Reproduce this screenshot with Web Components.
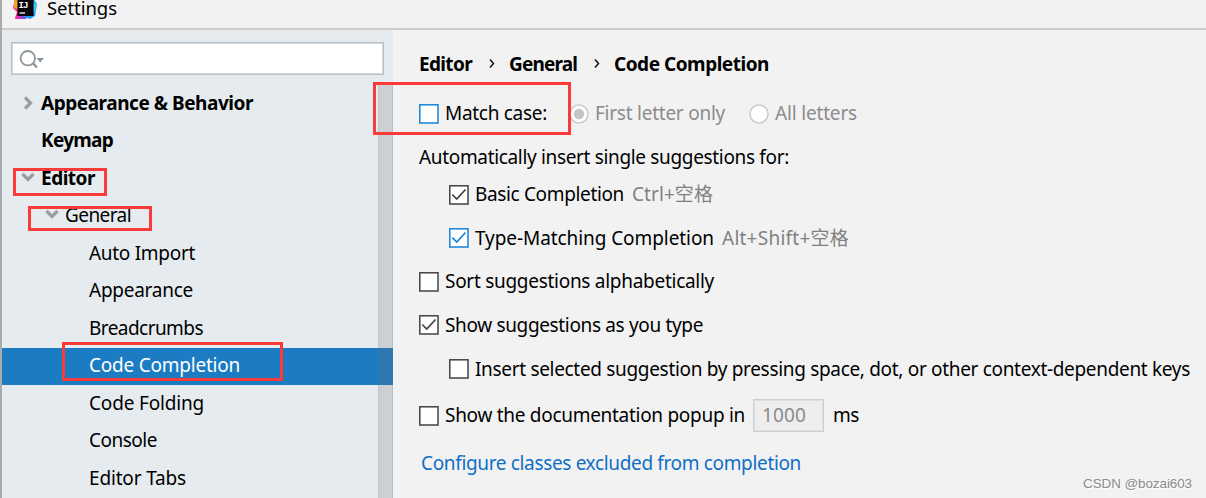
<!DOCTYPE html>
<html lang="en">
<head>
<meta charset="utf-8">
<title>Settings</title>
<style>
  body {
    margin: 0;
    overflow: hidden;
    font-family: "Noto Sans", "Noto Sans CJK SC", sans-serif;
    font-size: 19px;
    color: #000;
  }
</style>
</head>
<body>
<settings-window>
  <search-field slot="side"></search-field>
  <tree-view slot="side">
    <tree-item level="0" arrow="right" bold w="212">Appearance &amp; Behavior</tree-item>
    <tree-item level="0" bold w="72">Keymap</tree-item>
    <tree-item level="0" arrow="down" bold w="54">Editor</tree-item>
    <tree-item level="1" arrow="down" w="66">General</tree-item>
    <tree-item level="2" w="106">Auto Import</tree-item>
    <tree-item level="2" w="104">Appearance</tree-item>
    <tree-item level="2" w="114">Breadcrumbs</tree-item>
    <tree-item level="2" selected w="151">Code Completion</tree-item>
    <tree-item level="2" w="115">Code Folding</tree-item>
    <tree-item level="2" w="68">Console</tree-item>
    <tree-item level="2" w="97">Editor Tabs</tree-item>
  </tree-view>

  <form-row style="height: 36px; margin-bottom: 10px">
    <bread-crumbs></bread-crumbs>
  </form-row>
  <form-row style="height: 43px">
    <check-box tone="blue"></check-box>
    <fit-text w="102">Match case:</fit-text>
    <radio-dot checked style="margin-left: 22px"></radio-dot>
    <fit-text w="130" class="off">First letter only</fit-text>
    <radio-dot style="margin-left: 24px"></radio-dot>
    <fit-text w="82" class="off">All letters</fit-text>
  </form-row>
  <form-row style="height: 44px">
    <fit-text w="370">Automatically insert single suggestions for:</fit-text>
  </form-row>
  <form-row indent style="height: 31px; margin-bottom: 6px">
    <check-box checked></check-box>
    <fit-text w="149">Basic Completion</fit-text>
    <fit-text w="81" class="hint">Ctrl+空格</fit-text>
  </form-row>
  <form-row indent style="height: 44px">
    <check-box checked tone="blue"></check-box>
    <fit-text w="239">Type-Matching Completion</fit-text>
    <fit-text w="127" class="hint">Alt+Shift+空格</fit-text>
  </form-row>
  <form-row style="height: 43px">
    <check-box></check-box>
    <fit-text w="269">Sort suggestions alphabetically</fit-text>
  </form-row>
  <form-row style="height: 44px">
    <check-box checked></check-box>
    <fit-text w="258">Show suggestions as you type</fit-text>
  </form-row>
  <form-row indent style="height: 44px">
    <check-box></check-box>
    <fit-text w="715">Insert selected suggestion by pressing space, dot, or other context-dependent keys</fit-text>
  </form-row>
  <form-row style="height: 49px">
    <check-box></check-box>
    <fit-text w="300">Show the documentation popup in</fit-text>
    <number-field><fit-text w="44">1000</fit-text></number-field>
    <fit-text w="26">ms</fit-text>
  </form-row>
  <form-row style="height: 47px">
    <fit-text w="380" class="link">Configure classes excluded from completion</fit-text>
  </form-row>

  <mark-box slot="over" style="left: 373px; top: 82px; width: 198px; height: 53px"></mark-box>
  <mark-box slot="over" style="left: 13px; top: 168px; width: 94px; height: 28px"></mark-box>
  <mark-box slot="over" style="left: 28px; top: 206px; width: 124px; height: 25px"></mark-box>
  <mark-box slot="over" style="left: 62px; top: 342px; width: 221px; height: 39px"></mark-box>
  <water-mark slot="over"><fit-text w="109">CSDN @bozai603</fit-text></water-mark>
</settings-window>

<script>
  class BaseElement extends HTMLElement {
    constructor() {
      super();
      this.attachShadow({ mode: "open" });
    }

    connectedCallback() {
      this.shadowRoot.innerHTML = this.render();
      this.rendered();
    }

    rendered() {}
  }

  // Text that is tracked in or out to fill the width given in "w"
  class FitText extends BaseElement {
    render() {
      return `
        <style>
          :host { display: block; flex: none; white-space: nowrap; line-height: 26px; padding-bottom: 1px; }
          :host(.off) { color: #8c8c8c; margin-left: 6px; }
          :host(.hint) { color: #808080; margin-left: 8px; }
          :host(.link) { color: #0f6fc6; margin-left: 2px; }
          span { display: inline-block; }
        </style>
        <span><slot></slot></span>`;
    }

    rendered() {
      const width = Number(this.getAttribute("w"));
      const span = this.shadowRoot.querySelector("span");
      const natural = span.getBoundingClientRect().width;
      this.style.width = width + "px";
      span.style.letterSpacing = (width - natural) / this.textContent.length + "px";
    }
  }

  class SettingsWindow extends BaseElement {
    render() {
      return `
        <style>
          :host {
            display: grid;
            position: relative;
            grid-template: 30px 468px / 391px 1fr;
            box-sizing: border-box;
            width: 1206px;
            height: 498px;
            border-left: 2px solid #aaabad;
            background: #f2f2f2;
          }
          header {
            grid-column: 1 / 3;
            display: flex;
            border-bottom: 2px solid #cdcdcd;
          }
          header svg { margin: -5px 0 0 11px; flex: none; }
          header fit-text { margin: 0 0 0 9px; font-size: 18.5px; line-height: 15px; }
          aside { background: #e6ebef; padding-top: 12px; overflow: hidden; }
          main { padding: 16px 0 0 26px; overflow: hidden; }
        </style>
        <header>
          <svg width="25" height="25" viewBox="0 0 25 25">
            <path d="M2 3 13 2 11 23 2 23 4 17 0 13Z" fill="#f5367f"/>
            <path d="M1 5 5 3 6 14 1 13Z" fill="#fb9b32"/>
            <path d="M2 24 5 16 9 24Z" fill="#ed2fa9"/>
            <path d="M8 20 15 20 13 24 7 24Z" fill="#8a45e6"/>
            <path d="M12 2 20 3 24 9 22 21 17 24 11 22Z" fill="#169bf5"/>
            <path d="M21 7 24 9 22 18 20 15Z" fill="#31c7f4"/>
            <path d="M4.500 4.500h16v16.500h-16z" fill="#080509"/>
            <text x="5.500" y="13" font-family="Liberation Mono, monospace" font-size="9" font-weight="700" letter-spacing="-.8" fill="#fff">IJ</text>
            <path d="M6.500 18h5.500" stroke="#fff" stroke-width="1.300"/>
          </svg>
          <fit-text w="70">Settings</fit-text>
        </header>
        <aside><slot name="side"></slot></aside>
        <main><slot></slot></main>
        <slot name="over"></slot>`;
    }
  }

  class SearchField extends BaseElement {
    render() {
      return `
        <style>
          :host {
            display: flex;
            align-items: center;
            box-sizing: border-box;
            width: 373px;
            height: 33px;
            margin-left: 9px;
            border: 1px solid #bcbfc2;
            box-shadow: inset 0 0 0 1px #d6d9dc;
            background: #fff;
          }
        </style>
        <svg width="34" height="24" viewBox="0 0 34 24" fill="none" stroke="#8a949b" stroke-width="1.800">
          <circle cx="15.800" cy="11.200" r="7.200"/>
          <path d="M20.800 16.200 25 20.500" stroke-width="2.400"/>
          <path d="M24.500 11h7.500l-3.750 4.500z" fill="#8a949b" stroke="none"/>
        </svg>`;
    }
  }

  class TreeView extends BaseElement {
    render() {
      return `
        <style>
          :host { display: block; position: relative; padding-top: 10px; }
          .scroll {
            position: absolute;
            top: 10px;
            right: 0;
            bottom: 0;
            width: 13px;
            border-left: 1px solid rgba(115, 115, 115, .12);
            border-right: 1px solid rgba(100, 100, 100, .16);
            background: rgba(115, 115, 115, .22);
          }
        </style>
        <slot></slot>
        <div class="scroll"></div>`;
    }
  }

  class TreeItem extends BaseElement {
    render() {
      const arrow = this.getAttribute("arrow");
      const indent = 18 + this.getAttribute("level") * 24;
      const path = arrow === "right" ? "M5 1.500 10.500 7 5 12.500" : "M2.500 3 8 8.500 13.500 3";
      return `
        <style>
          :host { display: flex; align-items: center; height: 37.500px; }
          :host([bold]) { font-weight: 700; }
          :host([selected]) { background: #1b7cc4; height: 37px; margin-bottom: .5px; color: #fff; }
          svg { flex: none; width: 16px; margin: 0 5px 2px ${indent}px; }
          fit-text { padding-bottom: 2.400px; }
        </style>
        <svg height="14" viewBox="0 0 16 14" fill="none" stroke="#999da0" stroke-width="3.200">
          ${arrow ? `<path d="${path}"/>` : ""}
        </svg>
        <fit-text w="${this.getAttribute("w")}">${this.innerHTML}</fit-text>`;
    }
  }

  class FormRow extends BaseElement {
    render() {
      return `
        <style>
          :host { display: flex; align-items: center; }
          :host([indent]) { padding-left: 30px; }
        </style>
        <slot></slot>`;
    }
  }

  class BreadCrumbs extends BaseElement {
    render() {
      const arrow = `<svg width="8" height="12" viewBox="0 0 8 12" fill="none" stroke="#111" stroke-width="1.500"><path d="M2 1.500 5.500 5.500 2 9.500"/></svg>`;
      return `
        <style>
          :host { display: flex; align-items: center; font-weight: 700; }
          svg { margin: 0 13px 0 16px; }
        </style>
        <fit-text w="53">Editor</fit-text>${arrow}
        <fit-text w="68">General</fit-text>${arrow}
        <fit-text w="155">Code Completion</fit-text>`;
    }
  }

  class CheckBox extends BaseElement {
    render() {
      const color = this.getAttribute("tone") === "blue" ? "#1583d8" : "#424242";
      return `
        <style>
          :host { display: block; flex: none; width: 20px; height: 20px; margin-right: 6px; }
          svg { display: block; }
        </style>
        <svg width="20" height="20" viewBox="0 0 20 20" fill="none" stroke="${color}">
          <rect x=".8" y=".8" width="18.200" height="18.200" fill="#fff" stroke-width="1.500"/>
          ${this.hasAttribute("checked") ? `<path d="M3.300 9.500 7.700 14 16.500 4.500" stroke-width="1.700"/>` : ""}
        </svg>`;
    }
  }

  class RadioDot extends BaseElement {
    render() {
      return `
        <style>
          :host { display: block; flex: none; width: 20px; height: 20px; }
          svg { display: block; }
        </style>
        <svg width="20" height="20" viewBox="0 0 20 20">
          <circle cx="10" cy="10" r="9" fill="#fff" stroke="#ccc" stroke-width="1.500"/>
          ${this.hasAttribute("checked") ? `<circle cx="10" cy="10" r="5.200" fill="#c4c4c4"/>` : ""}
        </svg>`;
    }
  }

  class NumberField extends BaseElement {
    render() {
      return `
        <style>
          :host {
            display: flex;
            align-items: center;
            box-sizing: border-box;
            width: 71px;
            height: 33px;
            margin: 0 9px 0 8px;
            padding-left: 8px;
            border: 1px solid #cfcfcf;
            box-shadow: inset 0 0 0 1px #dedede;
            background: #eee;
            color: #8c8c8c;
          }
        </style>
        <slot></slot>`;
    }
  }

  class MarkBox extends BaseElement {
    render() {
      return `
        <style>
          :host {
            position: absolute;
            box-sizing: border-box;
            margin-left: -2px;
            border: 3px solid #fb3a3a;
          }
        </style>`;
    }
  }

  class WaterMark extends BaseElement {
    render() {
      return `
        <style>
          :host {
            position: absolute;
            right: 14px;
            bottom: 0;
            font-family: "Liberation Sans", sans-serif;
            font-size: 13.500px;
            color: #8b8b8b;
            text-shadow: 1px 1px 0 #fff;
          }
        </style>
        <slot></slot>`;
    }
  }

  customElements.define("settings-window", SettingsWindow);
  customElements.define("search-field", SearchField);
  customElements.define("tree-view", TreeView);
  customElements.define("tree-item", TreeItem);
  customElements.define("form-row", FormRow);
  customElements.define("bread-crumbs", BreadCrumbs);
  customElements.define("check-box", CheckBox);
  customElements.define("radio-dot", RadioDot);
  customElements.define("number-field", NumberField);
  customElements.define("mark-box", MarkBox);
  customElements.define("water-mark", WaterMark);
  // last, so that every font size around a text is set when it is measured
  customElements.define("fit-text", FitText);
</script>
</body>
</html>
